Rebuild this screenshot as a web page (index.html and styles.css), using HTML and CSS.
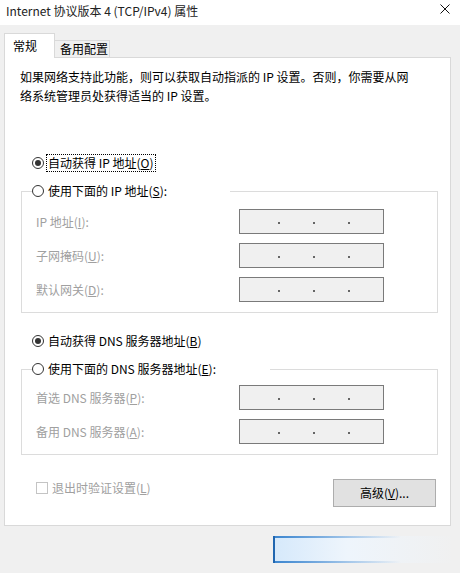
FILE: index.html
```html
<!DOCTYPE html>
<html lang="zh-CN">
<head>
  <meta charset="UTF-8">
  <meta name="viewport" content="width=device-width, initial-scale=1.0">
  <title>Internet 协议版本 4 (TCP/IPv4) 属性</title>
  <link rel="stylesheet" href="styles.css">
</head>
<body>
  <div class="titlebar">
    <span class="title">Internet 协议版本 4 (TCP/IPv4) 属性</span>
    <svg class="close" width="10" height="10" viewBox="0 0 10 10">
      <path d="M0.5 0.5 L9.5 9.5 M9.5 0.5 L0.5 9.5" stroke="#111" stroke-width="1" fill="none"/>
    </svg>
  </div>

  <div class="tabs">
    <div class="tab active">常规</div>
    <div class="tab">备用配置</div>
  </div>

  <div class="panel">
    <p class="intro">如果网络支持此功能，则可以获取自动指派的 IP 设置。否则，你需要从网<br>络系统管理员处获得适当的 IP 设置。</p>

    <div class="choice first">
      <span class="radio checked"></span>
      <span class="focus">自动获得 IP 地址(<u>O</u>)</span>
    </div>

    <fieldset class="group">
      <legend class="ip-legend">
        <div class="choice">
          <span class="radio"></span>
          <span class="choice-text">使用下面的 IP 地址(<u>S</u>):</span>
        </div>
      </legend>
      <div class="field">
        <span class="muted">IP 地址(<u>I</u>):</span>
        <div class="ipbox"><i></i><i></i><i></i></div>
      </div>
      <div class="field">
        <span class="muted">子网掩码(<u>U</u>):</span>
        <div class="ipbox"><i></i><i></i><i></i></div>
      </div>
      <div class="field">
        <span class="muted">默认网关(<u>D</u>):</span>
        <div class="ipbox"><i></i><i></i><i></i></div>
      </div>
    </fieldset>

    <div class="choice dns-auto">
      <span class="radio checked"></span>
      <span class="choice-text">自动获得 DNS 服务器地址(<u>B</u>)</span>
    </div>

    <fieldset class="group dns">
      <legend class="dns-legend">
        <div class="choice">
          <span class="radio"></span>
          <span class="choice-text">使用下面的 DNS 服务器地址(<u>E</u>):</span>
        </div>
      </legend>
      <div class="field">
        <span class="muted">首选 DNS 服务器(<u>P</u>):</span>
        <div class="ipbox"><i></i><i></i><i></i></div>
      </div>
      <div class="field">
        <span class="muted">备用 DNS 服务器(<u>A</u>):</span>
        <div class="ipbox"><i></i><i></i><i></i></div>
      </div>
    </fieldset>

    <div class="bottom-row">
      <label class="check">
        <span class="box"></span>
        <span class="muted">退出时验证设置(<u>L</u>)</span>
      </label>
      <button class="advanced">高级(<u>V</u>)...</button>
    </div>
  </div>

  <div class="footer">
    <div class="ghost-button"></div>
  </div>
</body>
</html>
```

FILE: styles.css
```css
body {
  margin: 0;
  width: 460px;
  height: 573px;
  overflow: hidden;
  background: #f0f0f0;
  color: #000;
  font-family: "Noto Sans CJK SC", "Liberation Sans", sans-serif;
  font-size: 12px;
  line-height: 18px;
}

.titlebar {
  height: 25px;
  box-sizing: border-box;
  background: #fff;
  display: flex;
  justify-content: space-between;
  align-items: flex-start;
  padding: 2px 10px 0 6px;
}

.title {
  color: #222;
}

.close {
  margin-top: 2px;
}

.tabs {
  display: flex;
  align-items: flex-end;
  height: 32px;
  padding-left: 4px;
}

.tab {
  width: 55px;
  height: 17px;
  box-sizing: border-box;
  padding-left: 5px;
  line-height: 16px;
  background: #f0f0f0;
  border: 1px solid #d9d9d9;
  border-left: 0;
  border-bottom: 0;
}

.tab.active {
  position: relative; /* sits over the panel's top border */
  z-index: 1;
  width: 51px;
  height: 25px;
  margin-bottom: -1px;
  padding: 3px 0 0 8px;
  line-height: 18px;
  background: #fff;
  border-left: 1px solid #d9d9d9;
}

.panel {
  margin-left: 4px;
  width: 447px;
  height: 469px;
  box-sizing: border-box;
  background: #fff;
  border: 1px solid #d9d9d9;
}

.intro {
  margin: 9px 0 0 15px;
  line-height: 19px;
}

.choice {
  display: flex;
  align-items: center;
  height: 18px;
}

.choice.first {
  margin: 49px 0 0 27px;
}

.choice.dns-auto {
  margin: 19px 0 0 27px;
}

.radio {
  width: 12px;
  height: 12px;
  box-sizing: border-box;
  border: 1px solid #333;
  border-radius: 50%;
  margin-right: 2px;
  display: flex;
  align-items: center;
  justify-content: center;
}

.radio.checked::after {
  content: "";
  width: 6px;
  height: 6px;
  border-radius: 50%;
  background: #333;
}

.focus {
  border: 1px dotted #000;
  padding: 0 1px;
  line-height: 16px;
}

.choice-text {
  padding-left: 2px;
}

.group {
  margin: 10px 0 0 16px;
  width: 417px;
  box-sizing: border-box;
  padding: 9px 0 10px 14px;
  border: 1px solid #dcdcdc;
  min-inline-size: 0;
}

.group.dns {
  padding: 7px 0 10px 14px;
}

.group legend {
  margin-left: -4px;
  padding: 0;
  height: 18px;
  background: #fff;
}

.ip-legend {
  width: 198px;
}

.dns-legend {
  width: 238px;
}

.field {
  display: grid;
  grid-template-columns: 203px 145px;
  align-items: center;
  height: 25px;
  margin-bottom: 9px;
}

.field:last-child {
  margin-bottom: 0;
}

.muted {
  color: #a0a0a0;
}

.ipbox {
  height: 25px;
  box-sizing: border-box;
  border: 1px solid #7a7a7a;
  background: #f0f0f0;
  display: flex;
  align-items: center;
  gap: 33px;
  padding: 3px 0 0 38px;
}

.ipbox i {
  width: 2px;
  height: 2px;
  background: #666;
}

.bottom-row {
  display: flex;
  justify-content: space-between;
  align-items: flex-start;
  margin: 24px 14px 0 31px;
}

.check {
  display: flex;
  align-items: center;
  gap: 4px;
  height: 18px;
}

.box {
  width: 12px;
  height: 12px;
  box-sizing: border-box;
  border: 1px solid #c4c4c4;
}

.advanced {
  width: 103px;
  height: 28px;
  background: #e1e1e1;
  border: 1px solid #adadad;
  font: inherit;
  color: #000;
  padding: 0;
}

.footer {
  padding-top: 10px;
}

.ghost-button {
  margin-left: 273px;
  width: 182px;
  height: 27px;
  box-sizing: border-box;
  border-left: 2px solid #2066b0;
  background:
    linear-gradient(to right, #3d86cf, rgba(61, 134, 207, 0) 70%) top / 100% 2px no-repeat,
    linear-gradient(to right, #3d86cf, rgba(61, 134, 207, 0) 70%) bottom / 100% 2px no-repeat,
    linear-gradient(to right, #d6e9fb, #eef5fc 40%, rgba(240, 240, 240, 0));
}
```
